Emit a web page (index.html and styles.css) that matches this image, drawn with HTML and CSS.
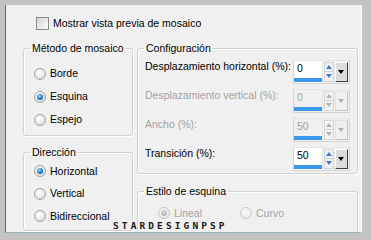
FILE: index.html
```html
<!DOCTYPE html>
<html lang="es">
  <head>
    <meta charset="UTF-8" />
    <title>Mosaico</title>
    <link rel="stylesheet" href="styles.css">
  </head>
  <body>
    <div class="panel">
      <label class="check-row">
        <span class="checkbox"></span>
        Mostrar vista previa de mosaico
      </label>

      <div class="columns">
        <div class="col-left">
          <fieldset class="group method">
            <legend>Método de mosaico</legend>
            <div class="radio-row"><span class="radio"></span>Borde</div>
            <div class="radio-row"><span class="radio checked"></span>Esquina</div>
            <div class="radio-row"><span class="radio"></span>Espejo</div>
          </fieldset>

          <fieldset class="group direction">
            <legend>Dirección</legend>
            <div class="radio-row"><span class="radio checked"></span>Horizontal</div>
            <div class="radio-row"><span class="radio"></span>Vertical</div>
            <div class="radio-row"><span class="radio"></span>Bidireccional</div>
          </fieldset>
        </div>

        <div class="col-right">
          <fieldset class="group config">
            <legend>Configuración</legend>

            <div class="field-row">
              <span class="field-label">Desplazamiento horizontal (%):</span>
              <div class="spin">
                <div class="spin-value">0<span class="spin-bar"></span></div>
                <div class="spin-arrows"><span class="up"></span><span class="down"></span></div>
                <div class="spin-drop"><span></span></div>
              </div>
            </div>

            <div class="field-row disabled">
              <span class="field-label">Desplazamiento vertical (%):</span>
              <div class="spin">
                <div class="spin-value">0<span class="spin-bar"></span></div>
                <div class="spin-arrows"><span class="up"></span><span class="down"></span></div>
                <div class="spin-drop"><span></span></div>
              </div>
            </div>

            <div class="field-row disabled">
              <span class="field-label">Ancho (%):</span>
              <div class="spin">
                <div class="spin-value">50<span class="spin-bar"></span></div>
                <div class="spin-arrows"><span class="up"></span><span class="down"></span></div>
                <div class="spin-drop"><span></span></div>
              </div>
            </div>

            <div class="field-row">
              <span class="field-label">Transición (%):</span>
              <div class="spin">
                <div class="spin-value">50<span class="spin-bar"></span></div>
                <div class="spin-arrows"><span class="up"></span><span class="down"></span></div>
                <div class="spin-drop"><span></span></div>
              </div>
            </div>
          </fieldset>

          <fieldset class="group corner">
            <legend>Estilo de esquina</legend>
            <div class="corner-options">
              <div class="radio-row disabled"><span class="radio checked"></span>Lineal</div>
              <div class="radio-row disabled"><span class="radio"></span>Curvo</div>
            </div>
          </fieldset>
        </div>
      </div>

      <div class="watermark">STARDESIGNPSP</div>
    </div>
  </body>
</html>
```

FILE: styles.css
```css
body {
  margin: 0;
  background-color: #c3c3c3;
  font-family: "Liberation Sans", Arial, sans-serif;
  font-size: 10.5px;
  color: #000;
}

.panel {
  position: relative;
  box-sizing: border-box;
  margin: 5px 0 0 5px;
  width: 357px;
  height: 228px;
  padding: 12px 0 0 17px;
  background-color: #f0f0f0;
  border-left: 1px solid #52707e;
  border-bottom: 1px solid #9db5bc;
  border-right: 1px solid #fafafa;
  overflow: hidden;
}

.check-row {
  display: flex;
  align-items: center;
  gap: 4px;
  margin-left: 13px;
  height: 13px;
  line-height: 13px;
}

.checkbox {
  box-sizing: border-box;
  width: 13px;
  height: 13px;
  border: 1px solid #8a8a8a;
  background: linear-gradient(135deg, #d6d6d6, #fbfbfb);
}

.columns {
  display: flex;
  gap: 4px;
  margin-top: 12px;
}

.col-left {
  width: 110px;
}

.col-right {
  width: 221px;
}

/* Group boxes */
.group {
  margin: 0;
  padding: 0;
  min-width: 0;
  border: 1px solid #d2d2d2;
  border-radius: 3px;
  box-shadow: 1px 1px 0 #ffffff, inset 1px 1px 0 #ffffff;
}

.group legend {
  padding: 0 2px;
  margin-left: 6px;
  line-height: 13px;
  white-space: nowrap;
}

.method {
  padding-top: 7px;
  padding-bottom: 4px;
}

.method .radio-row,
.direction .radio-row {
  margin-left: 10px;
}

.direction {
  margin-top: 10px;
  padding-top: 1px;
  padding-bottom: 2px;
}

.direction .radio-row {
  height: 22.5px;
}

.config {
  padding: 4.5px 7px 3px 7px;
}

.config legend {
  margin-left: -1px;
}

.corner {
  margin-top: 11.5px;
  height: 80px;
  padding-top: 8.5px;
}

/* Radios */
.radio-row {
  display: flex;
  align-items: center;
  gap: 4px;
  height: 23px;
  line-height: 13px;
}

.radio {
  box-sizing: border-box;
  position: relative;
  width: 12px;
  height: 12px;
  border-radius: 50%;
  border: 1px solid #a2a2a2;
  background: radial-gradient(circle at 40% 35%, #ffffff, #e4e4e4 60%, #c8c8c8);
}

.radio.checked::after {
  content: "";
  position: absolute;
  left: 2px;
  top: 2px;
  width: 6px;
  height: 6px;
  border-radius: 50%;
  background: radial-gradient(circle at 40% 35%, #9ad8ff, #1f6fc0 60%, #0b3f78);
}

.corner-options {
  display: flex;
  margin-left: 20px;
}

.corner-options .radio-row {
  width: 82px;
  height: 13px;
}

.disabled {
  color: #a3a3a3;
}

.disabled .radio {
  border-color: #c6c6c6;
  background: radial-gradient(circle at 40% 35%, #fafafa, #e6e6e6);
}

.disabled .radio.checked::after {
  background: radial-gradient(circle at 40% 35%, #d8d8d8, #a8a8a8);
}

/* Spin fields */
.field-row {
  display: flex;
  justify-content: space-between;
  align-items: flex-start;
  height: 23px;
  line-height: 13px;
}

.field-row + .field-row {
  margin-top: 6px;
}

.spin {
  display: flex;
  gap: 1px;
  box-sizing: border-box;
  width: 57px;
  height: 24px;
  border: 1px solid #d4d4d4;
  border-top-color: #e4e4e4;
  padding-right: 1px;
}

.spin-value {
  position: relative;
  width: 30px;
  padding: 1px 0 0 3px;
  box-sizing: border-box;
  background-color: #fff;
  border-right: 1px solid #e6e6e6;
}

.spin-bar {
  position: absolute;
  left: 0;
  bottom: 1px;
  width: 28px;
  height: 4px;
  background-color: #3a98ec;
}

.spin-arrows {
  display: flex;
  flex-direction: column;
  width: 11px;
  height: 20px;
  margin-top: 1px;
  border: 1px solid #cfd6de;
  box-sizing: border-box;
  background-color: #eef2f7;
}

.spin-arrows span {
  flex: 1;
  position: relative;
}

.spin-arrows .up {
  border-bottom: 1px solid #c9d2dc;
}

.spin-arrows span::after {
  content: "";
  position: absolute;
  left: 1.5px;
  border-left: 3.5px solid transparent;
  border-right: 3.5px solid transparent;
}

.spin-arrows .up::after {
  top: 2px;
  border-bottom: 4px solid #4a74c4;
}

.spin-arrows .down::after {
  top: 2px;
  border-top: 4px solid #4a74c4;
}

.spin-drop {
  position: relative;
  width: 13px;
  height: 20px;
  margin-top: 1px;
  box-sizing: border-box;
  background-color: #dcdcdc;
  border: 1px solid #ffffff;
  border-right-color: #3f3f3f;
  border-bottom-color: #3f3f3f;
}

.spin-drop span {
  position: absolute;
  left: 2px;
  top: 7px;
  border-left: 3.5px solid transparent;
  border-right: 3.5px solid transparent;
  border-top: 4px solid #000;
}

.disabled .spin-value {
  background-color: #f0f0f0;
}

.disabled .spin-arrows {
  background-color: #f2f2f2;
  border-color: #d8d8d8;
}

.disabled .spin-arrows .up::after {
  border-bottom-color: #b4b4b4;
}

.disabled .spin-arrows .down::after {
  border-top-color: #b4b4b4;
}

.disabled .spin-drop {
  background-color: #f0f0f0;
  border-color: #e0e0e0;
  border-right-color: #c4c4c4;
  border-bottom-color: #c4c4c4;
}

.disabled .spin-drop span {
  border-top-color: #b0b0b0;
}

.watermark {
  position: absolute;
  left: 107px;
  top: 216px;
  font-family: "DejaVu Sans Mono", monospace;
  font-size: 9.5px;
  font-weight: bold;
  letter-spacing: 3.1px;
  line-height: 9px;
  color: #1a1a1a;
}
```
